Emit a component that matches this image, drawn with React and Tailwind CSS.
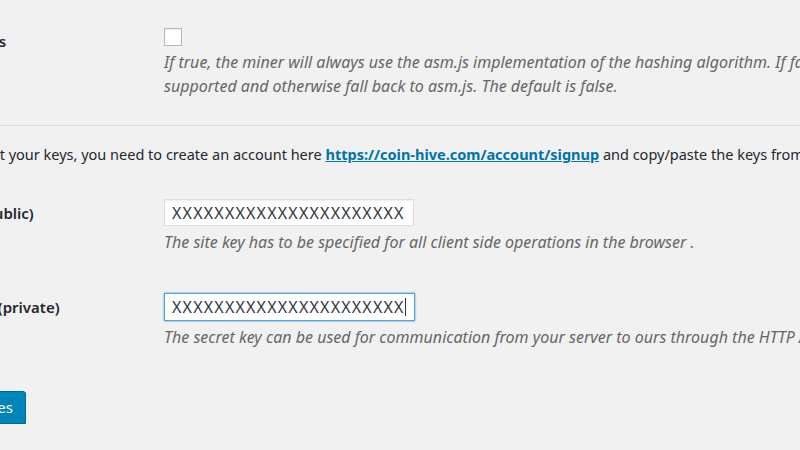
export default function App() {
  return (
    <div className="h-[450px] w-[800px] overflow-hidden bg-[#f1f1f1] font-['Noto_Sans',sans-serif] text-[14px] text-[#23282d]">
      {/* FORCE ASM.JS */}
      <div className="flex pt-[28px]">
        <div className="w-[164px] shrink-0 overflow-hidden pt-[2px]">
          <div className="-ml-[84px] whitespace-nowrap text-[15px] font-semibold">Force asm.js</div>
        </div>
        <div className="min-w-0 flex-1 whitespace-nowrap">
          <div className="h-[18px] w-[18px] border border-[#b4b9be] bg-white shadow-[inset_0_1px_2px_rgba(0,0,0,0.07)]" />
          <p className="mt-[4px] text-[16px] italic leading-[24px] text-[#666]">
            If true, the miner will always use the asm.js implementation of the hashing algorithm. If false it will use WebAssembly if
            <br />
            supported and otherwise fall back to asm.js. The default is false.
          </p>
        </div>
      </div>

      <div className="mt-[27px] h-px bg-[#dcdcdc]" />

      {/* INTRO */}
      <p className="-ml-[37px] mt-[18px] whitespace-nowrap text-[14.5px] leading-[20px]">
        To get your keys, you need to create an account here{" "}
        <a className="font-bold text-[#0073aa] underline">https://coin-hive.com/account/signup</a> and copy/paste the keys from
        the settings page.
      </p>

      {/* SITE KEY */}
      <div className="mt-[35px] flex">
        <div className="w-[164px] shrink-0 overflow-hidden pt-[3px]">
          <div className="-ml-[82px] whitespace-nowrap text-[15px] font-semibold">Site Key (public)</div>
        </div>
        <div className="min-w-0 flex-1 whitespace-nowrap">
          <div className="flex h-[27px] w-[250px] items-center border border-[#ddd] bg-white px-[7px] text-[16px] tracking-[1.2px] text-[#32373c] shadow-[inset_0_1px_2px_rgba(0,0,0,0.07)]">
            XXXXXXXXXXXXXXXXXXXXXX
          </div>
          <p className="mt-[5px] text-[16px] italic leading-[22px] text-[#666]">
            The site key has to be specified for all client side operations in the browser .
          </p>
        </div>
      </div>

      {/* SECRET KEY */}
      <div className="mt-[40px] flex">
        <div className="w-[164px] shrink-0 overflow-hidden pt-[3px]">
          <div className="-ml-[82px] whitespace-nowrap text-[15px] font-semibold">Secret Key (private)</div>
        </div>
        <div className="min-w-0 flex-1 whitespace-nowrap">
          <div className="flex h-[28px] w-[251px] items-center border border-[#5b9dd9] bg-white px-[7px] text-[16px] tracking-[1.2px] text-[#32373c] shadow-[0_0_2px_rgba(30,140,190,0.8)]">
            XXXXXXXXXXXXXXXXXXXXXX
            <span className="h-[18px] w-px bg-[#32373c]" />
          </div>
          <p className="mt-[5px] text-[16px] italic leading-[22px] text-[#666]">
            The secret key can be used for communication from your server to ours through the HTTP API.
          </p>
        </div>
      </div>

      {/* SUBMIT */}
      <div className="mt-[43px] overflow-hidden">
        <button
          type="button"
          className="-ml-[98px] h-[33px] rounded-[3px] border border-[#006799] bg-[#0085ba] px-[12px] text-[15px] text-white shadow-[0_1px_0_#006799]"
        >
          Save Changes
        </button>
      </div>
    </div>
  );
}
